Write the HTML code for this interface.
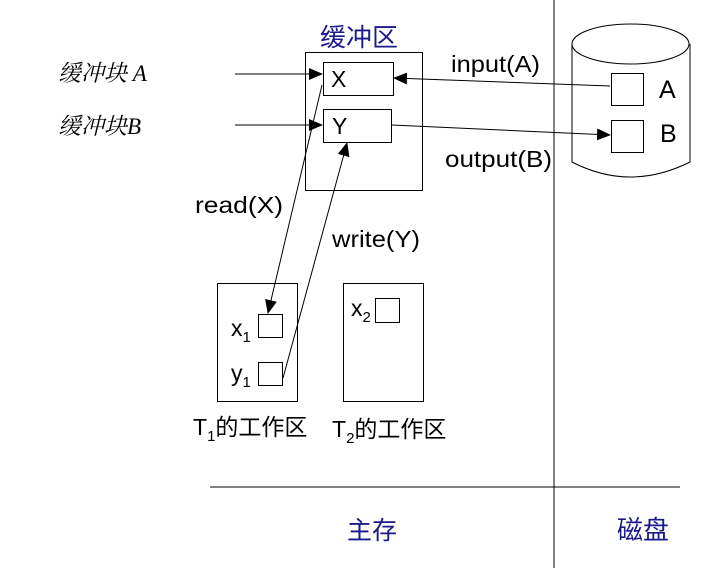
<!DOCTYPE html>
<html><head><meta charset="utf-8"><style>
html,body{margin:0;padding:0;background:#fff;width:720px;height:572px;overflow:hidden}
svg text{font-family:"Liberation Sans","Noto Sans CJK SC",sans-serif;fill:#000}
</style></head><body>
<svg width="720" height="572" viewBox="0 0 720 572" xmlns="http://www.w3.org/2000/svg">
<defs>
<marker id="ar" markerWidth="14" markerHeight="12" refX="13" refY="6" orient="auto" markerUnits="userSpaceOnUse">
<path d="M0,0 L14,6 L0,12 Z" fill="#000"/></marker>
</defs>
<g fill="none" stroke="#000" stroke-width="1">
<line x1="554" y1="0" x2="554" y2="568"/>
<line x1="210" y1="487" x2="680" y2="487"/>
<rect x="305.5" y="52.5" width="117" height="138"/>
<rect x="323.5" y="62.5" width="70" height="33"/>
<rect x="323.5" y="109.5" width="68" height="33"/>
<rect x="217.5" y="283.5" width="80" height="118"/>
<rect x="258.5" y="314.5" width="24" height="23"/>
<rect x="258.5" y="362.5" width="24" height="23"/>
<rect x="343.5" y="283.5" width="80" height="118"/>
<rect x="375.5" y="298.5" width="24" height="24"/>
<ellipse cx="630.5" cy="44" rx="58.5" ry="20"/>
<path d="M572,44 L572,162 Q630,192 690,162 L690,44"/>
<rect x="611.5" y="73.5" width="32" height="32"/>
<rect x="611.5" y="120.5" width="32" height="32"/>
<line x1="235" y1="74" x2="322" y2="74" marker-end="url(#ar)"/>
<line x1="235" y1="125" x2="322" y2="125" marker-end="url(#ar)"/>
<line x1="610" y1="86" x2="394" y2="78" marker-end="url(#ar)"/>
<line x1="392" y1="125" x2="610" y2="135" marker-end="url(#ar)"/>
<line x1="322" y1="85" x2="268" y2="313" marker-end="url(#ar)"/>
<line x1="283" y1="378" x2="347" y2="143" marker-end="url(#ar)"/>
</g>
<text x="320" y="46" font-size="25" textLength="78" lengthAdjust="spacingAndGlyphs" style="fill:#1a1a8c">缓冲区</text>
<text x="58" y="81" font-size="23" font-style="italic" style="font-family:'Liberation Serif','Noto Serif CJK SC',serif">缓冲块 A</text>
<text x="58" y="134" font-size="23" font-style="italic" style="font-family:'Liberation Serif','Noto Serif CJK SC',serif">缓冲块B</text>
<text x="331" y="87" font-size="23">X</text>
<text x="332" y="134" font-size="23">Y</text>
<text x="451" y="72" font-size="23" textLength="89" lengthAdjust="spacingAndGlyphs">input(A)</text>
<text x="445" y="167" font-size="23" textLength="107" lengthAdjust="spacingAndGlyphs">output(B)</text>
<text x="195" y="213" font-size="23" textLength="88" lengthAdjust="spacingAndGlyphs">read(X)</text>
<text x="332" y="247" font-size="23" textLength="88" lengthAdjust="spacingAndGlyphs">write(Y)</text>
<text x="659" y="98" font-size="25">A</text>
<text x="660" y="142" font-size="25">B</text>
<text x="231" y="336" font-size="23">x<tspan font-size="15" dy="6">1</tspan></text>
<text x="231" y="381" font-size="23">y<tspan font-size="15" dy="6">1</tspan></text>
<text x="351" y="316" font-size="23">x<tspan font-size="15" dy="6">2</tspan></text>
<text x="193" y="435" font-size="23">T<tspan font-size="15" dy="6">1</tspan><tspan dy="-6">的工作区</tspan></text>
<text x="332" y="437" font-size="23">T<tspan font-size="15" dy="6">2</tspan><tspan dy="-6">的工作区</tspan></text>
<text x="347" y="539" font-size="25" style="fill:#1a1a8c">主存</text>
<text x="617" y="539" font-size="26" style="fill:#1a1a8c">磁盘</text>
</svg>
</body></html>
